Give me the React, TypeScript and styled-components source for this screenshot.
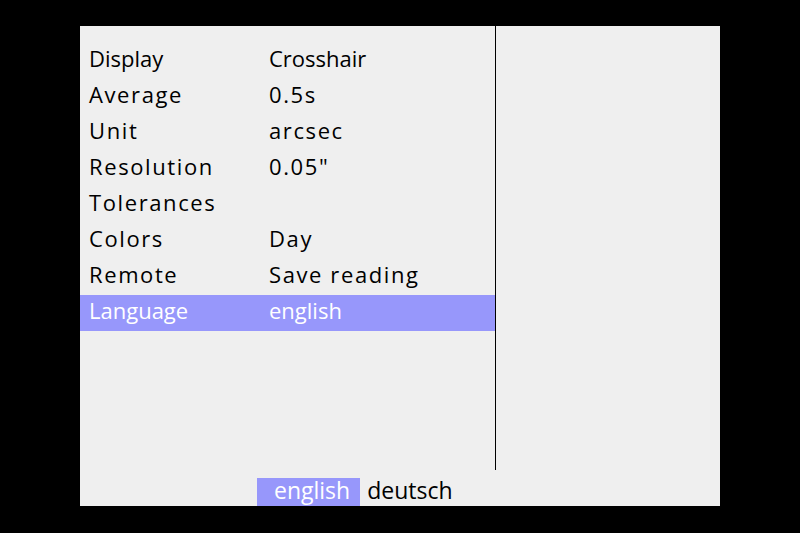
import React from 'react';
import styled, { createGlobalStyle } from 'styled-components';

const GlobalStyle = createGlobalStyle`
  html, body {
    margin: 0;
    padding: 0;
    background: #000;
  }
`;

const Screen = styled.div`
  width: 800px;
  height: 533px;
  background: #000;
  display: flex;
  justify-content: center;
  padding-top: 26px;
  box-sizing: border-box;
`;

const Panel = styled.div`
  width: 640px;
  height: 480px;
  background: #efefef;
  display: flex;
  flex-direction: column;
  font-family: "Open Sans", "DejaVu Sans", sans-serif;
  color: #000;
`;

const Body = styled.div`
  height: 444px;
  display: flex;
`;

const MenuColumn = styled.div`
  width: 416px;
  border-right: 1px solid #000;
  padding-top: 17px;
  box-sizing: border-box;
  display: flex;
  flex-direction: column;
`;

const SidePane = styled.div`
  flex: 1;
`;

const Row = styled.div<{ $active?: boolean }>`
  height: 36px;
  display: flex;
  align-items: center;
  padding-left: 9px;
  padding-bottom: 6px;
  box-sizing: border-box;
  background: ${p => (p.$active ? '#9797fb' : 'transparent')};
  color: ${p => (p.$active ? '#fff' : '#000')};
  font-size: 22px;
`;

const Label = styled.span<{ $spaced?: boolean }>`
  width: 180px;
  letter-spacing: ${p => (p.$spaced ? '1.6px' : '0')};
`;

const Value = styled.span<{ $spaced?: boolean }>`
  letter-spacing: ${p => (p.$spaced ? '1.6px' : '0')};
`;

const LangBar = styled.div`
  height: 36px;
  display: flex;
  align-items: flex-end;
  padding-left: 177px;
  font-size: 23px;
`;

const LangOption = styled.span<{ $active?: boolean }>`
  height: 28px;
  display: flex;
  align-items: center;
  padding: ${p => (p.$active ? '0 10px 4px 17px' : '0 7px 4px')};
  box-sizing: border-box;
  background: ${p => (p.$active ? '#9797fb' : 'transparent')};
  color: ${p => (p.$active ? '#fff' : '#000')};
`;

const items = [
  { label: 'Display', value: 'Crosshair', spaced: false },
  { label: 'Average', value: '0.5s', spaced: true },
  { label: 'Unit', value: 'arcsec', spaced: true },
  { label: 'Resolution', value: '0.05"', spaced: true },
  { label: 'Tolerances', value: '', spaced: true },
  { label: 'Colors', value: 'Day', spaced: true },
  { label: 'Remote', value: 'Save reading', spaced: true },
  { label: 'Language', value: 'english', spaced: false, active: true },
];

export default function App() {
  return (
    <>
      <GlobalStyle />
      <Screen>
        <Panel>
          <Body>
            <MenuColumn>
              {items.map(it => (
                <Row key={it.label} $active={it.active}>
                  <Label $spaced={it.spaced}>{it.label}</Label>
                  <Value $spaced={it.spaced}>{it.value}</Value>
                </Row>
              ))}
            </MenuColumn>
            <SidePane />
          </Body>
          <LangBar>
            <LangOption $active>english</LangOption>
            <LangOption>deutsch</LangOption>
          </LangBar>
        </Panel>
      </Screen>
    </>
  );
}
